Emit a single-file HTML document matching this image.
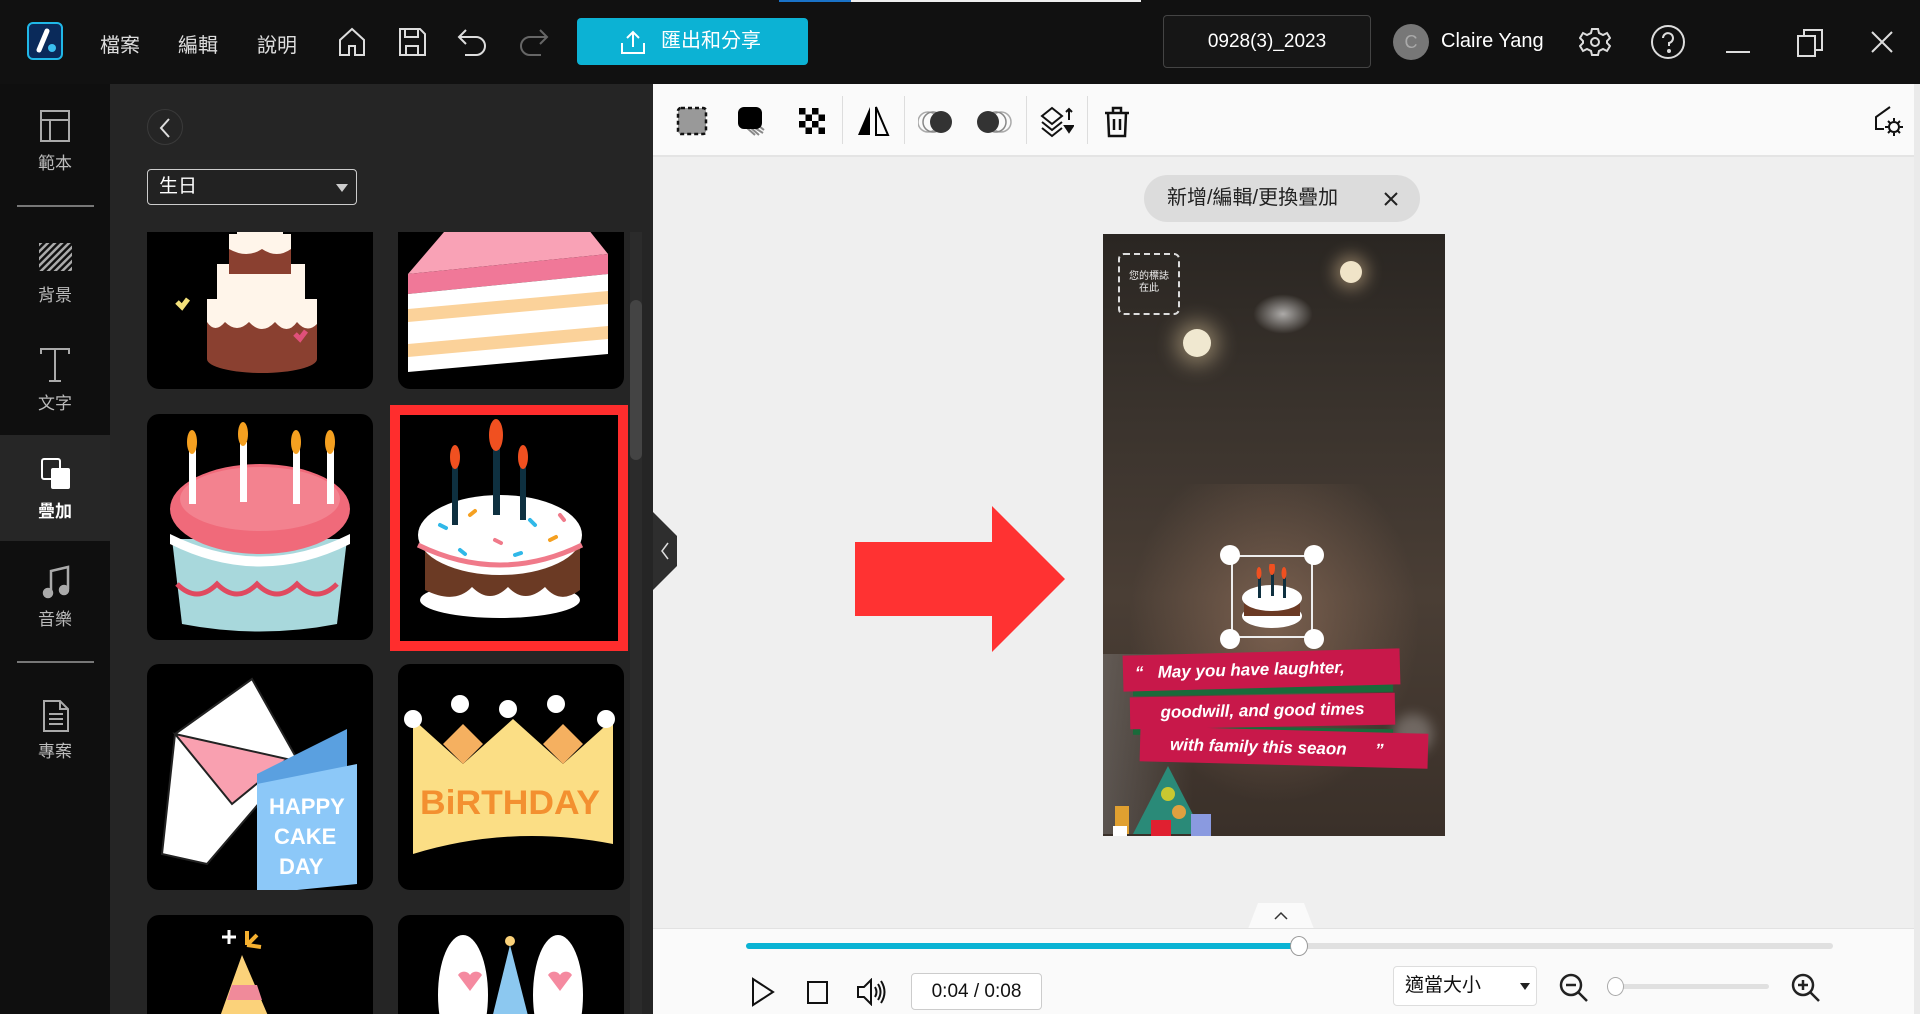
<!DOCTYPE html>
<html><head><meta charset="utf-8">
<style>
*{margin:0;padding:0;box-sizing:border-box}
body{width:1920px;height:1014px;overflow:hidden;background:#efefef;font-family:"Liberation Sans","Noto Sans CJK TC",sans-serif;position:relative}
.a{position:absolute}
.top{left:0;top:0;width:1920px;height:84px;background:#111}
.menu{color:#ddd;font-size:20px;top:29px}
.side{left:0;top:84px;width:110px;height:930px;background:#0f0f0f}
.lbl{color:#bbb;font-size:17px;width:110px;text-align:center;left:0}
.panel{left:110px;top:84px;width:543px;height:930px;background:#252525;overflow:hidden}
.tile{background:#000;border-radius:12px;overflow:hidden}
.tb{left:653px;top:84px;width:1267px;height:73px;background:#fafafa;border-bottom:2px solid #e4e4e4}
.sep{width:1px;height:48px;background:#ddd;top:96px}
.bot{left:653px;top:928px;width:1267px;height:86px;background:#fafafa;border-top:1px solid #e2e2e2}
</style></head><body>
<div class="a top"></div>
<div class="a" style="left:779px;top:0;width:72px;height:2px;background:#1a73c8"></div>
<div class="a" style="left:851px;top:0;width:290px;height:2px;background:#eee"></div>
<svg class="a" style="left:27px;top:22px" width="38" height="38" viewBox="0 0 38 38"><rect x="1" y="1" width="34" height="36" rx="5" fill="#0a2a5a" stroke="#20b8e8" stroke-width="2"/><path d="M12 28 L20 9" stroke="#fff" stroke-width="5" stroke-linecap="round"/><circle cx="25" cy="26" r="4" fill="#3ac0f0"/></svg>
<div class="a menu" style="left:100px">檔案</div>
<div class="a menu" style="left:178px">編輯</div>
<div class="a menu" style="left:257px">說明</div>
<svg class="a" style="left:336px;top:26px" width="32" height="32" viewBox="0 0 32 32" fill="none" stroke="#ddd" stroke-width="2"><path d="M4 14 L16 3 L28 14 V29 H19 V20 H13 V29 H4 Z"/></svg>
<svg class="a" style="left:396px;top:26px" width="32" height="32" viewBox="0 0 32 32" fill="none" stroke="#ddd" stroke-width="2"><path d="M4 3 H24 L29 8 V29 H4 Z M9 3 V11 H22 V3 M10 29 V20 H22 V29"/></svg>
<svg class="a" style="left:456px;top:26px" width="34" height="32" viewBox="0 0 34 32" fill="none" stroke="#ddd" stroke-width="2"><path d="M10 4 L3 11 L10 18 M3 11 H20 A9 9 0 0 1 20 29 H9"/></svg>
<svg class="a" style="left:516px;top:26px" width="34" height="32" viewBox="0 0 34 32" fill="none" stroke="#666" stroke-width="2"><path d="M24 4 L31 11 L24 18 M31 11 H14 A9 9 0 0 0 14 29 H25"/></svg>
<div class="a" style="left:577px;top:18px;width:231px;height:47px;background:#0cb2d4;border-radius:4px;color:#fff;font-size:20px;line-height:47px;padding-left:84px">匯出和分享</div>
<svg class="a" style="left:620px;top:29px" width="26" height="26" viewBox="0 0 26 26" fill="none" stroke="#fff" stroke-width="2"><path d="M13 3 V18 M7 9 L13 3 L19 9 M2 14 V24 H24 V14"/></svg>
<div class="a" style="left:1163px;top:15px;width:208px;height:53px;border:1px solid #444;border-radius:4px;background:#161616;color:#fff;font-size:19px;text-align:center;line-height:51px">0928(3)_2023</div>
<div class="a" style="left:1393px;top:24px;width:36px;height:36px;border-radius:50%;background:#777;color:#aaa;font-size:18px;text-align:center;line-height:36px">C</div>
<div class="a" style="left:1441px;top:30px;color:#fff;font-size:20px">Claire Yang</div>
<svg class="a" style="left:1579px;top:26px" width="32" height="32" viewBox="0 0 32 32" fill="none" stroke="#ddd" stroke-width="2"><path d="M13 3 H19 L20 7 L24 9 L28 7 L31 12 L28 15 V17 L31 20 L28 25 L24 23 L20 25 L19 29 H13 L12 25 L8 23 L4 25 L1 20 L4 17 V15 L1 12 L4 7 L8 9 L12 7 Z"/><circle cx="16" cy="16" r="4"/></svg>
<svg class="a" style="left:1650px;top:24px" width="36" height="36" viewBox="0 0 36 36" fill="none" stroke="#ddd" stroke-width="2"><circle cx="18" cy="18" r="16"/><path d="M13 14 A5 5 0 1 1 19 19 V22"/><circle cx="19" cy="27" r="1" fill="#ddd"/></svg>
<div class="a" style="left:1726px;top:51px;width:24px;height:2px;background:#ddd"></div>
<svg class="a" style="left:1795px;top:27px" width="32" height="32" viewBox="0 0 32 32" fill="none" stroke="#ddd" stroke-width="2"><rect x="3" y="9" width="17" height="20"/><path d="M9 9 V3 H27 V23 H20"/></svg>
<svg class="a" style="left:1870px;top:30px" width="24" height="24" viewBox="0 0 24 24" stroke="#ddd" stroke-width="2"><path d="M2 2 L22 22 M22 2 L2 22"/></svg>

<div class="a side"></div>
<svg class="a" style="left:40px;top:110px" width="30" height="32" viewBox="0 0 30 32" fill="none" stroke="#aaa" stroke-width="2"><rect x="1" y="1" width="28" height="30"/><path d="M1 10 H29 M10 10 V31"/></svg>
<div class="a lbl" style="top:149px">範本</div>
<div class="a" style="left:17px;top:205px;width:77px;height:2px;background:#777"></div>
<svg class="a" style="left:39px;top:243px" width="33" height="28" viewBox="0 0 33 28"><defs><pattern id="hp" width="5" height="5" patternUnits="userSpaceOnUse" patternTransform="rotate(45)"><rect width="2.5" height="5" fill="#aaa"/></pattern></defs><rect width="33" height="28" fill="url(#hp)"/></svg>
<div class="a lbl" style="top:281px">背景</div>
<svg class="a" style="left:40px;top:348px" width="30" height="34" viewBox="0 0 30 34" fill="none" stroke="#aaa" stroke-width="2"><path d="M1 6 V1 H29 V6 M15 1 V33 M9 33 H21"/></svg>
<div class="a lbl" style="top:389px">文字</div>
<div class="a" style="left:0;top:435px;width:110px;height:106px;background:#262626"></div>
<svg class="a" style="left:41px;top:458px" width="30" height="32" viewBox="0 0 30 32"><rect x="1" y="1" width="18" height="20" rx="2" fill="none" stroke="#fff" stroke-width="2"/><rect x="10" y="10" width="19" height="21" rx="2" fill="#fff"/></svg>
<div class="a lbl" style="top:497px;color:#fff;font-weight:bold">疊加</div>
<svg class="a" style="left:42px;top:565px" width="28" height="34" viewBox="0 0 28 34" fill="none" stroke="#aaa" stroke-width="2.5"><path d="M9 28 V6 L26 2 V24"/><ellipse cx="6" cy="28" rx="4" ry="4" fill="#aaa"/><ellipse cx="22" cy="25" rx="4" ry="4" fill="#aaa"/></svg>
<div class="a lbl" style="top:605px">音樂</div>
<div class="a" style="left:17px;top:661px;width:77px;height:2px;background:#777"></div>
<svg class="a" style="left:43px;top:700px" width="26" height="32" viewBox="0 0 26 32" fill="none" stroke="#aaa" stroke-width="2"><path d="M1 1 H17 L25 9 V31 H1 Z M17 1 V9 H25 M6 14 H20 M6 19 H20 M6 24 H20"/></svg>
<div class="a lbl" style="top:737px">專案</div>

<div class="a panel">
 <div class="a" style="left:37px;top:25px;width:36px;height:36px;border-radius:50%;border:1px solid #3a3a3a"></div>
 <svg class="a" style="left:48px;top:33px" width="14" height="22" viewBox="0 0 14 22" fill="none" stroke="#ddd" stroke-width="2"><path d="M11 2 L3 11 L11 20"/></svg>
 <div class="a" style="left:37px;top:85px;width:210px;height:36px;border:1px solid #ccc;border-radius:4px;background:#222;color:#fff;font-size:19px;line-height:33px;padding-left:11px">生日</div>
 <div class="a" style="left:226px;top:100px;width:0;height:0;border-left:6px solid transparent;border-right:6px solid transparent;border-top:8px solid #ccc"></div>
 <div class="a" style="left:520px;top:148px;width:12px;height:782px;background:#2b2b2b"></div>
 <div class="a" style="left:520px;top:216px;width:12px;height:160px;background:#444;border-radius:6px"></div>
 <div class="a" style="left:0;top:148px;width:520px;height:782px;overflow:hidden">
 <div class="a" style="left:0;top:-148px;width:520px;height:930px">
 <div class="a tile" style="left:37px;top:120px;width:226px;height:185px">
  <svg width="226" height="185" viewBox="0 0 226 185"><ellipse cx="115" cy="155" rx="55" ry="14" fill="#8a4030"/><rect x="60" y="95" width="110" height="60" fill="#8a4030"/><path d="M60 95 H170 V120 Q160 130 150 118 Q140 132 128 118 Q115 132 102 118 Q90 130 78 118 Q68 130 60 118Z" fill="#fff5ea"/><rect x="70" y="60" width="88" height="40" fill="#fff5ea"/><rect x="82" y="30" width="62" height="40" fill="#8a4030"/><path d="M82 30 H144 V45 Q130 55 115 45 Q100 55 82 45Z" fill="#fff5ea"/><rect x="90" y="0" width="46" height="32" fill="#fff5ea"/><path d="M30 98 l5 5 l6-8" stroke="#f3e07a" stroke-width="5" fill="none"/><path d="M148 130 l5 5 l6-8" stroke="#e0507a" stroke-width="5" fill="none"/></svg>
 </div>
 <div class="a tile" style="left:288px;top:120px;width:226px;height:185px">
  <svg width="226" height="185" viewBox="0 0 226 185"><path d="M10 70 L70 0 H170 L210 50Z" fill="#f9a2b6"/><path d="M10 70 L210 50 V70 L10 90Z" fill="#f07898"/><path d="M10 90 L210 70 V150 L10 168Z" fill="#fff"/><path d="M10 105 L210 87 V100 L10 118Z M10 140 L210 122 V135 L10 153Z" fill="#fbd29a"/><rect x="98" y="0" width="8" height="28" fill="#9cd0f0"/></svg>
 </div>
 <div class="a tile" style="left:37px;top:330px;width:226px;height:226px">
  <svg width="226" height="226" viewBox="0 0 226 226"><path d="M25 125 H200 L190 210 Q113 225 35 210Z" fill="#a8d8dc"/><path d="M30 170 Q50 190 70 170 Q90 190 110 170 Q130 190 150 170 Q170 190 190 170" stroke="#e04a60" stroke-width="5" fill="none"/><ellipse cx="113" cy="95" rx="90" ry="45" fill="#f06a7a"/><ellipse cx="113" cy="85" rx="80" ry="32" fill="#f3828f"/><path d="M23 120 Q113 165 203 120 V130 Q113 175 23 130Z" fill="#fff"/><g fill="#fff"><rect x="42" y="35" width="7" height="55"/><rect x="93" y="28" width="7" height="60"/><rect x="146" y="35" width="7" height="55"/><rect x="180" y="35" width="7" height="55"/></g><g fill="#f5a020"><ellipse cx="45" cy="28" rx="5" ry="12"/><ellipse cx="96" cy="20" rx="5" ry="12"/><ellipse cx="149" cy="28" rx="5" ry="12"/><ellipse cx="183" cy="28" rx="5" ry="12"/></g></svg>
 </div>
 <div class="a" style="left:280px;top:321px;width:238px;height:246px;border:10px solid #ff2d2d;background:#000">
  <svg width="218" height="226" viewBox="0 0 218 226"><ellipse cx="100" cy="185" rx="80" ry="18" fill="#fff"/><path d="M25 125 H180 V175 Q160 190 145 172 Q125 190 108 172 Q90 190 72 172 Q55 190 25 175Z" fill="#6b3a24"/><ellipse cx="100" cy="120" rx="82" ry="40" fill="#fff"/><path d="M18 130 Q100 170 182 130" stroke="#f07a8a" stroke-width="5" fill="none"/><g stroke-width="4" stroke-linecap="round"><path d="M40 110 l6 3" stroke="#30b8e8"/><path d="M70 100 l5 -4" stroke="#f5a020"/><path d="M95 125 l6 3" stroke="#f07a8a"/><path d="M130 105 l5 5" stroke="#30b8e8"/><path d="M150 125 l6 -3" stroke="#f5a020"/><path d="M60 135 l5 4" stroke="#30b8e8"/><path d="M115 140 l6 -2" stroke="#30b8e8"/><path d="M160 100 l4 5" stroke="#f07a8a"/></g><g fill="#0e3040"><rect x="52" y="50" width="6" height="60"/><rect x="93" y="30" width="7" height="70"/><rect x="120" y="50" width="6" height="55"/></g><g fill="#f05020"><ellipse cx="55" cy="42" rx="5" ry="12"/><ellipse cx="96" cy="20" rx="7" ry="16"/><ellipse cx="123" cy="42" rx="5" ry="12"/></g></svg>
 </div>
 <div class="a tile" style="left:37px;top:580px;width:226px;height:226px">
  <svg width="226" height="226" viewBox="0 0 226 226"><path d="M28 70 L105 15 L150 95 L60 200 L15 190Z" fill="#fff" stroke="#222" stroke-width="2"/><path d="M28 70 L140 95 L85 140Z" fill="#f9a0b0" stroke="#222" stroke-width="2"/><path d="M110 110 L200 65 V210 L110 225Z" fill="#5aa0e0"/><path d="M110 120 L210 100 V220 L110 230Z" fill="#8cc8f8"/><text x="122" y="150" font-family="Liberation Sans" font-weight="bold" font-size="22" fill="#fff">HAPPY</text><text x="127" y="180" font-family="Liberation Sans" font-weight="bold" font-size="22" fill="#fff">CAKE</text><text x="132" y="210" font-family="Liberation Sans" font-weight="bold" font-size="22" fill="#fff">DAY</text></svg>
 </div>
 <div class="a tile" style="left:288px;top:580px;width:226px;height:226px">
  <svg width="226" height="226" viewBox="0 0 226 226"><path d="M15 55 L65 100 L115 55 L165 100 L215 55 V180 Q113 160 15 190Z" fill="#fbde85"/><path d="M45 80 L65 60 L85 80 L65 100Z M145 80 L165 60 L185 80 L165 100Z" fill="#f5b060"/><g fill="#fff"><circle cx="15" cy="55" r="9"/><circle cx="62" cy="40" r="9"/><circle cx="110" cy="45" r="9"/><circle cx="158" cy="40" r="9"/><circle cx="208" cy="55" r="9"/></g><text x="22" y="150" font-family="Liberation Sans" font-weight="bold" font-size="34" textLength="180" lengthAdjust="spacingAndGlyphs" fill="#f39030">BiRTHDAY</text></svg>
 </div>
 <div class="a tile" style="left:37px;top:831px;width:226px;height:140px">
  <svg width="226" height="140" viewBox="0 0 226 140"><path d="M95 40 L70 110 H125Z" fill="#fbd27a"/><path d="M85 70 L110 70 L115 85 L80 85Z" fill="#f08a9a"/><path d="M100 30 l0-14 M100 30 l10-10 M100 30 l14 2" stroke="#f5b030" stroke-width="4"/><path d="M75 22 h14 M82 15 v14" stroke="#fff" stroke-width="3"/></svg>
 </div>
 <div class="a tile" style="left:288px;top:831px;width:226px;height:140px">
  <svg width="226" height="140" viewBox="0 0 226 140"><ellipse cx="65" cy="80" rx="25" ry="60" fill="#fff"/><ellipse cx="160" cy="80" rx="25" ry="60" fill="#fff"/><path d="M60 60 a7 7 0 0 1 12 0 a7 7 0 0 1 12 0 l-12 16z M150 60 a7 7 0 0 1 12 0 a7 7 0 0 1 12 0 l-12 16z" fill="#f58aa0"/><path d="M112 30 L85 140 H140Z" fill="#8cc8f0"/><circle cx="112" cy="26" r="5" fill="#fbd27a"/></svg>
 </div>
 </div></div>
</div>
<svg class="a" style="left:653px;top:512px" width="26" height="78" viewBox="0 0 26 78"><path d="M0 0 L24 24 V54 L0 78Z" fill="#2e2e2e"/><path d="M15 31 L9 39 L15 47" stroke="#ddd" stroke-width="1.5" fill="none"/></svg>

<div class="a tb"></div>
<svg class="a" style="left:676px;top:106px" width="32" height="30" viewBox="0 0 32 30"><rect x="2" y="2" width="28" height="26" rx="3" fill="#999" stroke="#111" stroke-width="2.5" stroke-dasharray="4 3"/></svg>
<svg class="a" style="left:737px;top:106px" width="30" height="30" viewBox="0 0 30 30"><path d="M10 22 l8 7 M14 22 l8 7 M18 22 l8 5 M22 20 l5 4" stroke="#888" stroke-width="2"/><rect x="1" y="1" width="24" height="22" rx="6" fill="#000"/></svg>
<svg class="a" style="left:799px;top:108px" width="26" height="26" viewBox="0 0 4 4"><path d="M0 0h1v1h-1zM2 0h1v1h-1zM1 1h1v1h-1zM3 1h1v1h-1zM0 2h1v1h-1zM2 2h1v1h-1zM1 3h1v1h-1zM3 3h1v1h-1z" fill="#000"/></svg>
<div class="a sep" style="left:842px"></div>
<svg class="a" style="left:856px;top:106px" width="34" height="30" viewBox="0 0 34 30"><path d="M14 1 V29 H2Z" fill="#000"/><path d="M20 1 L32 29 H20Z" fill="none" stroke="#000" stroke-width="2"/></svg>
<div class="a sep" style="left:904px"></div>
<svg class="a" style="left:918px;top:110px" width="36" height="24" viewBox="0 0 36 24"><circle cx="10" cy="12" r="10" fill="none" stroke="#aaa" stroke-width="1.5"/><circle cx="15" cy="12" r="10" fill="none" stroke="#888" stroke-width="1.5"/><circle cx="23" cy="12" r="11" fill="#333"/></svg>
<svg class="a" style="left:976px;top:110px" width="36" height="24" viewBox="0 0 36 24"><circle cx="25" cy="12" r="10" fill="none" stroke="#aaa" stroke-width="1.5"/><circle cx="20" cy="12" r="10" fill="none" stroke="#888" stroke-width="1.5"/><circle cx="12" cy="12" r="11" fill="#333"/></svg>
<div class="a sep" style="left:1026px"></div>
<svg class="a" style="left:1040px;top:106px" width="34" height="32" viewBox="0 0 34 32" fill="none" stroke="#111" stroke-width="2"><path d="M12 2 L22 10 L12 18 L2 10Z M2 16 L12 24 L22 16 M2 22 L12 30 L22 22"/><path d="M29 3 V14 M26 6 L29 3 L32 6"/><path d="M25 20 H33 L29 26Z" fill="#111"/></svg>
<div class="a sep" style="left:1087px"></div>
<svg class="a" style="left:1104px;top:106px" width="26" height="32" viewBox="0 0 26 32" fill="none" stroke="#111" stroke-width="2.5"><path d="M1 7 H25 M9 7 V2 H17 V7 M4 7 L5 30 H21 L22 7 M10 13 V24 M16 13 V24"/></svg>
<svg class="a" style="left:1872px;top:105px" width="32" height="32" viewBox="0 0 32 32" fill="none" stroke="#111" stroke-width="2"><path d="M18 2 L4 12 V24 H12"/><circle cx="22" cy="22" r="5"/><path d="M22 13 V16 M22 28 V31 M13 22 H16 M28 22 H31 M16 16 l2 2 M26 26 l2 2 M28 16 l-2 2 M16 28 l2-2"/></svg>

<div class="a" style="left:1144px;top:175px;width:276px;height:47px;background:#dcdcdc;border-radius:24px;color:#222;font-size:20px;line-height:47px;padding-left:23px">新增/編輯/更換疊加</div>
<svg class="a" style="left:1383px;top:191px" width="16" height="16" viewBox="0 0 16 16" stroke="#222" stroke-width="2"><path d="M2 2 L14 14 M14 2 L2 14"/></svg>

<svg class="a" style="left:855px;top:506px" width="210" height="146" viewBox="0 0 210 146"><path d="M0 36 H137 V0 L210 73 L137 146 V110 H0Z" fill="#ff3232"/></svg>

<div class="a" style="left:1103px;top:234px;width:342px;height:602px;overflow:hidden;background:linear-gradient(#2a2622 0%,#3a332d 30%,#4a3e35 60%,#3a3029 100%)">
 <div class="a" style="left:0;top:250px;width:342px;height:350px;background:radial-gradient(ellipse at 50% 40%,rgba(170,130,105,.5),rgba(0,0,0,0) 60%)"></div>
 <div class="a" style="left:0;top:420px;width:90px;height:180px;background:linear-gradient(90deg,rgba(150,150,150,.35),rgba(0,0,0,0))"></div>
 <div class="a" style="left:80px;top:95px;width:28px;height:28px;border-radius:50%;background:#f0e8d0;box-shadow:0 0 20px 8px rgba(255,230,180,.4)"></div>
 <div class="a" style="left:237px;top:27px;width:22px;height:22px;border-radius:50%;background:#f0e4c8;box-shadow:0 0 16px 6px rgba(255,220,170,.4)"></div>
 <div class="a" style="left:290px;top:480px;width:40px;height:40px;border-radius:50%;background:rgba(255,255,255,.25);filter:blur(6px)"></div>
 <div class="a" style="left:150px;top:60px;width:60px;height:40px;background:radial-gradient(rgba(255,255,255,.6),rgba(255,255,255,0) 70%)"></div>
 <div class="a" style="left:15px;top:19px;width:62px;height:62px;border:2px dashed #ddd;border-radius:6px;color:#eee;font-size:10px;text-align:center;padding-top:16px;line-height:12px">您的標誌<br>在此</div>
 <div class="a" style="left:128px;top:321px;width:82px;height:83px;border:2px solid #eee"></div>
 <svg class="a" style="left:133px;top:330px" width="72" height="70" viewBox="0 0 72 70"><ellipse cx="36" cy="52" rx="30" ry="12" fill="#fff"/><rect x="8" y="36" width="56" height="16" fill="#6b3a24"/><ellipse cx="36" cy="34" rx="30" ry="13" fill="#fff"/><rect x="22" y="12" width="3" height="22" fill="#0e3040"/><rect x="35" y="6" width="3" height="26" fill="#0e3040"/><rect x="47" y="12" width="3" height="22" fill="#0e3040"/><g fill="#f05020"><ellipse cx="23" cy="9" rx="2.5" ry="6"/><ellipse cx="36" cy="4" rx="3" ry="7"/><ellipse cx="48" cy="9" rx="2.5" ry="6"/></g></svg>
 <div class="a" style="left:117px;top:311px;width:20px;height:20px;border-radius:50%;background:#fff"></div>
 <div class="a" style="left:201px;top:311px;width:20px;height:20px;border-radius:50%;background:#fff"></div>
 <div class="a" style="left:117px;top:395px;width:20px;height:20px;border-radius:50%;background:#fff"></div>
 <div class="a" style="left:201px;top:395px;width:20px;height:20px;border-radius:50%;background:#fff"></div>
 <div class="a" style="left:30px;top:450px;width:260px;height:10px;background:#1a6a3a;transform:rotate(-1deg)"></div>
 <div class="a" style="left:30px;top:493px;width:260px;height:10px;background:#1a6a3a;transform:rotate(1deg)"></div>
 <div class="a" style="left:20px;top:418px;width:277px;height:36px;background:#c8184a;transform:rotate(-1.5deg);color:#fff;font-weight:bold;font-style:italic;font-size:17px;line-height:36px;padding-left:12px">“ &nbsp;&nbsp;May you have laughter,</div>
 <div class="a" style="left:27px;top:461px;width:265px;height:32px;background:#c8184a;transform:rotate(-1deg);color:#fff;font-weight:bold;font-style:italic;font-size:17px;line-height:32px;text-align:center">goodwill, and good times</div>
 <div class="a" style="left:37px;top:496px;width:288px;height:35px;background:#c8184a;transform:rotate(1.5deg);color:#fff;font-weight:bold;font-style:italic;font-size:17px;line-height:35px;padding-left:30px">with family this seaon &nbsp;&nbsp;&nbsp;&nbsp;&nbsp;”</div>
 <svg class="a" style="left:10px;top:530px" width="110" height="72" viewBox="0 0 110 72"><path d="M55 2 L90 70 H20Z" fill="#2a8a78"/><circle cx="55" cy="30" r="7" fill="#c8c830"/><circle cx="66" cy="48" r="7" fill="#e0a040"/><rect x="2" y="42" width="14" height="28" fill="#e0a030"/><rect x="38" y="56" width="20" height="16" fill="#e02030"/><rect x="78" y="50" width="20" height="22" fill="#8a9ae0"/><rect x="0" y="62" width="14" height="10" fill="#fff"/></svg>
</div>

<svg class="a" style="left:1248px;top:903px" width="66" height="26" viewBox="0 0 66 26"><path d="M10 0 H56 L66 26 H0Z" fill="#fafafa"/><path d="M27 16 L33 10 L39 16" stroke="#333" stroke-width="1.5" fill="none"/></svg>
<div class="a bot"></div>
<div class="a" style="left:746px;top:943px;width:1087px;height:6px;background:#e0e0e0;border-radius:3px"></div>
<div class="a" style="left:746px;top:943px;width:553px;height:6px;background:#0ab3d4;border-radius:3px"></div>
<div class="a" style="left:1290px;top:936px;width:18px;height:20px;border-radius:50%;background:#fff;border:1.5px solid #999"></div>
<svg class="a" style="left:750px;top:977px" width="26" height="30" viewBox="0 0 26 30" fill="none" stroke="#111" stroke-width="2"><path d="M3 2 L23 15 L3 28Z"/></svg>
<div class="a" style="left:807px;top:981px;width:21px;height:23px;border:2px solid #111"></div>
<svg class="a" style="left:856px;top:978px" width="32" height="28" viewBox="0 0 32 28" fill="none" stroke="#111" stroke-width="2"><path d="M2 9 H8 L15 2 V26 L8 19 H2Z M19 9 Q22 14 19 19 M22 6 Q27 14 22 22 M25 3 Q32 14 25 25"/></svg>
<div class="a" style="left:911px;top:973px;width:131px;height:37px;border:1px solid #ccc;border-radius:4px;background:#fff;font-size:19px;text-align:center;line-height:35px;color:#111">0:04 / 0:08</div>
<div class="a" style="left:1393px;top:966px;width:144px;height:40px;border:1px solid #ddd;border-radius:4px;background:#fff;font-size:19px;line-height:38px;padding-left:11px;color:#111">適當大小</div>
<div class="a" style="left:1520px;top:983px;width:0;height:0;border-left:5px solid transparent;border-right:5px solid transparent;border-top:7px solid #222"></div>
<svg class="a" style="left:1558px;top:972px" width="32" height="32" viewBox="0 0 32 32" fill="none" stroke="#222" stroke-width="2.5"><circle cx="13" cy="13" r="10"/><path d="M20 20 L29 29 M8 13 H18"/></svg>
<div class="a" style="left:1607px;top:984px;width:162px;height:5px;background:#e0e0e0;border-radius:3px"></div>
<div class="a" style="left:1607px;top:977px;width:17px;height:19px;border-radius:50%;background:#fff;border:1.5px solid #aaa"></div>
<svg class="a" style="left:1790px;top:972px" width="32" height="32" viewBox="0 0 32 32" fill="none" stroke="#222" stroke-width="2.5"><circle cx="13" cy="13" r="10"/><path d="M20 20 L29 29 M8 13 H18 M13 8 V18"/></svg>
<div class="a" style="left:1914px;top:84px;width:6px;height:930px;background:#eaeaea"></div>
</body></html>
